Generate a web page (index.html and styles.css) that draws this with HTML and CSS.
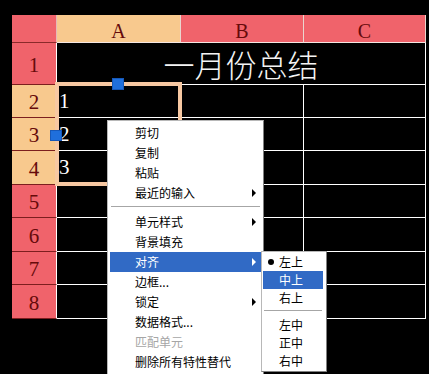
FILE: index.html
```html
<!DOCTYPE html>
<html lang="zh">
<head>
<meta charset="utf-8">
<title>一月份总结</title>
<link rel="stylesheet" href="styles.css">
</head>
<body>
<div class="sheet">
  <div class="grid">
    <div class="hd corner red"></div>
    <div class="hd colhd peach">A</div>
    <div class="hd colhd red">B</div>
    <div class="hd colhd red">C</div>

    <div class="hd rowhd red">1</div>
    <div class="title">一月份总结</div>

    <div class="hd rowhd peach">2</div>
    <div class="cell">1</div><div class="cell"></div><div class="cell"></div>

    <div class="hd rowhd peach">3</div>
    <div class="cell">2</div><div class="cell"></div><div class="cell"></div>

    <div class="hd rowhd peach">4</div>
    <div class="cell">3</div><div class="cell"></div><div class="cell"></div>

    <div class="hd rowhd red">5</div>
    <div class="cell"></div><div class="cell"></div><div class="cell"></div>

    <div class="hd rowhd red">6</div>
    <div class="cell"></div><div class="cell"></div><div class="cell"></div>

    <div class="hd rowhd red">7</div>
    <div class="cell"></div><div class="cell"></div><div class="cell"></div>

    <div class="hd rowhd red">8</div>
    <div class="cell"></div><div class="cell"></div><div class="cell"></div>
  </div>

  <div class="selection"></div>
  <div class="grip grip-top"></div>
  <div class="grip grip-left"></div>

  <div class="menu">
    <div class="item">剪切</div>
    <div class="item">复制</div>
    <div class="item">粘贴</div>
    <div class="item has-sub">最近的输入</div>
    <div class="sep"></div>
    <div class="item has-sub">单元样式</div>
    <div class="item">背景填充</div>
    <div class="item has-sub active">对齐</div>
    <div class="item">边框...</div>
    <div class="item has-sub">锁定</div>
    <div class="item">数据格式...</div>
    <div class="item disabled">匹配单元</div>
    <div class="item">删除所有特性替代</div>
  </div>

  <div class="submenu">
    <div class="sitem checked">左上</div>
    <div class="sitem active">中上</div>
    <div class="sitem">右上</div>
    <div class="sep"></div>
    <div class="sitem">左中</div>
    <div class="sitem">正中</div>
    <div class="sitem">右中</div>
  </div>
</div>
</body>
</html>
```

FILE: styles.css
```css
html, body {
  margin: 0;
  padding: 0;
  background: #000;
}

body {
  width: 429px;
  height: 374px;
  overflow: hidden;
}

.sheet {
  position: relative;
  width: 429px;
  height: 374px;
  box-sizing: border-box;
  padding: 15px 0 0 12px;
}

.grid {
  display: grid;
  grid-template-columns: 45px 124px 123px 122px;
  grid-template-rows: 28px 42px 33px 33px 34px 33px 34px 33px 34px;
  width: 414px;
}

.grid > div {
  box-sizing: border-box;
}

.hd {
  display: flex;
  align-items: center;
  justify-content: center;
  font-family: "Liberation Serif", "Times New Roman", serif;
  color: #660a0a;
}

.red { background: #f0636b; }
.peach { background: #f8c98e; }

.corner {
  border-right: 1px solid #e6b8b8;
  border-bottom: 1px solid #8a2a2a;
}

.colhd {
  font-size: 20px;
  border-right: 1px solid #ead6cf;
  border-bottom: 1px solid #f4e6e2;
  padding-top: 5px;
}

.rowhd {
  font-size: 21px;
  border-right: 1px solid #fff;
  border-bottom: 1px solid #7c1e1e;
  padding-top: 3px;
}

.title {
  grid-column: span 3;
  display: flex;
  align-items: center;
  justify-content: center;
  border-right: 1px solid #fff;
  border-bottom: 1px solid #fff;
  color: #f4f4f4;
  font-family: "Noto Sans CJK SC", sans-serif;
  font-weight: 300;
  font-size: 31px;
}

.cell {
  display: flex;
  align-items: center;
  border-right: 1px solid #fff;
  border-bottom: 1px solid #fff;
  color: #fff;
  font-family: "Liberation Serif", "Times New Roman", serif;
  font-size: 21px;
  padding-left: 2px;
}

.selection {
  position: absolute;
  left: 55px;
  top: 82px;
  width: 127px;
  height: 104px;
  box-sizing: border-box;
  border: 4px solid #f7c8a2;
}

.grip {
  position: absolute;
  background: #1f6fdc;
  border: 1px solid #1658b8;
  box-sizing: border-box;
}

.grip-top {
  left: 112px;
  top: 78px;
  width: 12px;
  height: 12px;
}

.grip-left {
  left: 50px;
  top: 130px;
  width: 12px;
  height: 11px;
}

.menu,
.submenu {
  position: absolute;
  background: #fff;
  box-sizing: border-box;
  border: 1px solid #b8b8b8;
  border-right-color: #808080;
  border-bottom-color: #808080;
  font-family: "Noto Sans CJK SC", sans-serif;
  font-size: 12px;
  color: #000;
}

.menu {
  left: 107px;
  top: 120px;
  width: 157px;
  padding: 2px;
}

.item {
  position: relative;
  height: 20px;
  line-height: 20px;
  padding-left: 25px;
  white-space: nowrap;
}

.item.has-sub::after {
  content: "";
  position: absolute;
  right: 5px;
  top: 6px;
  border-left: 4px solid #000;
  border-top: 4px solid transparent;
  border-bottom: 4px solid transparent;
}

.item.active {
  background: #316ac5;
  color: #fff;
}

.item.active::after {
  border-left-color: #fff;
}

.item.disabled {
  color: #a6a6a6;
}

.sep {
  height: 1px;
  margin: 3px 1px 4px;
  border-top: 1px solid #a6a6a6;
  background: #fff;
}

.submenu {
  left: 261px;
  top: 251px;
  width: 66px;
  padding: 1px 3px 1px 1px;
}

.sitem {
  position: relative;
  height: 18px;
  line-height: 18px;
  padding-left: 16px;
  white-space: nowrap;
}

.sitem.active {
  background: #316ac5;
  color: #fff;
}

.sitem.checked::before {
  content: "";
  position: absolute;
  left: 5px;
  top: 6px;
  width: 6px;
  height: 6px;
  border-radius: 50%;
  background: #000;
}
```
